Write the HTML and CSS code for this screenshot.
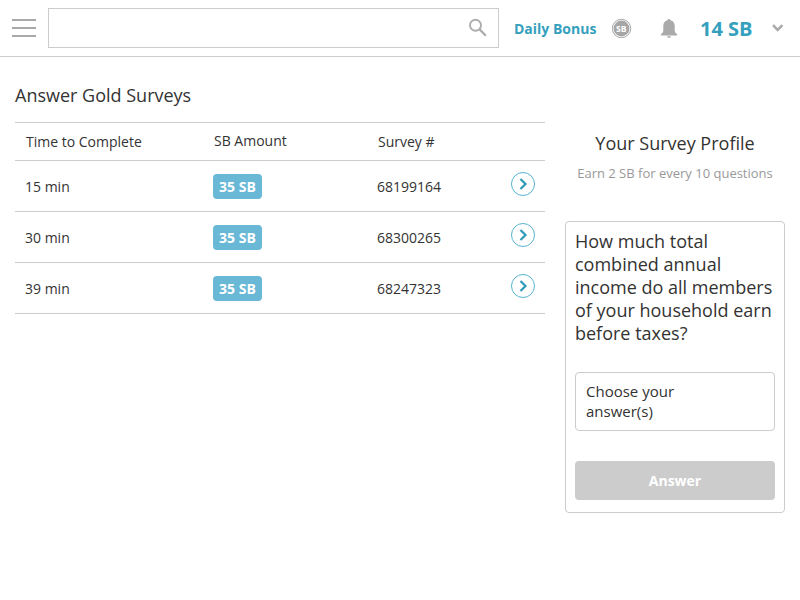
FILE: index.html
```
<!DOCTYPE html>
<html lang="en">
<head>
<meta charset="utf-8">
<title>Answer Gold Surveys</title>
<link rel="stylesheet" href="styles.css">
</head>
<body>
<header class="topbar">
  <div class="menu"><span></span><span></span><span></span></div>
  <div class="search">
    <svg width="20" height="20" viewBox="0 0 20 20" fill="none" stroke="#adadad"><circle cx="7.500" cy="7.300" r="5.500" stroke-width="1.900"/><path d="M11.600 11.400L17.900 17.700" stroke-width="2.300"/></svg>
  </div>
  <a class="bonus">Daily Bonus</a>
  <svg class="coin" width="20" height="20" viewBox="0 0 20 20"><circle cx="9.500" cy="10.500" r="9.200" fill="#fff" stroke="#a6a6a6"/><circle cx="9.500" cy="10.500" r="7.900" fill="#a6a6a6"/><text x="9.300" y="13.500" text-anchor="middle">SB</text></svg>
  <svg class="bell" width="18" height="20" viewBox="0 0 18 20" fill="#aaa"><path d="M9 1a1.500 1.500 0 0 1 1.500 1.300C13.300 3 14.700 5.200 14.700 8v4.500c0 1.600.7 2.600 2.300 3.600v1.400H1v-1.400c1.600-1 2.300-2 2.300-3.600V8c0-2.800 1.400-5 4.200-5.700A1.500 1.500 0 0 1 9 1zM7 18.200h4c-.1 1-.9 1.600-2 1.600s-1.900-.6-2-1.600z"/></svg>
  <b class="balance">14 SB</b>
  <svg class="chev" width="12" height="8" viewBox="0 0 12 8" fill="none" stroke="#a9a9a9" stroke-width="2.500"><path d="M1 1.200l4.700 4.700 4.700-4.700"/></svg>
</header>
<main class="page">
  <section class="surveys">
    <h1>Answer Gold Surveys</h1>
    <div class="row head"><span>Time to Complete</span><span class="amount">SB Amount</span><span>Survey #</span></div>
    <div class="row"><span>15 min</span><span><b class="badge">35 SB</b></span><span>68199164</span><svg class="go" width="24" height="24" viewBox="0 0 24 24"><circle cx="12" cy="12" r="11.500"/><path d="M9.500 7l5 5-5 5"/></svg></div>
    <div class="row"><span>30 min</span><span><b class="badge">35 SB</b></span><span>68300265</span><svg class="go" width="24" height="24" viewBox="0 0 24 24"><circle cx="12" cy="12" r="11.500"/><path d="M9.500 7l5 5-5 5"/></svg></div>
    <div class="row"><span>39 min</span><span><b class="badge">35 SB</b></span><span>68247323</span><svg class="go" width="24" height="24" viewBox="0 0 24 24"><circle cx="12" cy="12" r="11.500"/><path d="M9.500 7l5 5-5 5"/></svg></div>
  </section>
  <aside class="profile">
    <h2>Your Survey Profile</h2>
    <p class="earn">Earn 2 SB for every 10 questions</p>
    <div class="card">
      <p class="question">How much total combined annual income do all members of your household earn before taxes?</p>
      <div class="choose">Choose your<br>answer(s)</div>
      <button class="answer">Answer</button>
    </div>
  </aside>
</main>
</body>
</html>
```
FILE: styles.css
```
* { box-sizing: border-box; }
body { margin: 0; background: #fff; color: #333; font: 14px/20px "Open Sans", sans-serif; }
h1, h2, p { margin: 0; font-weight: 400; }
svg { display: block; flex: none; }
.topbar { height: 57px; border-bottom: 1px solid #ccc; display: flex; align-items: center; padding: 0 16px 0 12px; white-space: nowrap; }
.menu { width: 24px; height: 18px; display: flex; flex-direction: column; justify-content: space-between; }
.menu span { height: 2px; background: #a9a9a9; }
.search { width: 451px; height: 40px; margin-left: 12px; border: 1px solid #ccc; display: flex; align-items: center; justify-content: flex-end; padding-right: 10px; }
.bonus { width: 83px; margin-left: 15px; padding-top: 2px; font-weight: 700; color: #35a0bd; }
.coin { margin-left: 15px; }
.coin text { font-size: 8.5px; font-weight: 700; fill: #fff; }
.bell { margin-left: 28px; }
.balance { width: 52px; margin-left: 22px; padding-top: 2px; font-size: 20px; color: #35a0bd; }
.chev { margin-left: 20px; }
.page { display: flex; gap: 20px; padding: 0 15px; }
.surveys { width: 530px; }
h1 { font-size: 18px; line-height: 24px; padding: 26px 0 15px; }
.row { height: 51px; border-bottom: 1px solid #ccc; display: grid; grid-template-columns: 188px 164px 134px 24px; padding: 1px 10px 0; align-items: center; }
.head { height: 39px; border-top: 1px solid #ccc; padding: 0 11px; }
.amount { padding-bottom: 2px; }
.badge { display: block; width: 49px; height: 25px; line-height: 25px; border-radius: 4px; background: #69b8d6; color: #fff; text-align: center; }
.go { margin-top: -5px; fill: none; }
.go circle { stroke: #56b3d0; }
.go path { stroke: #2d9ab7; stroke-width: 2.2; }
.profile { width: 220px; padding-top: 73px; }
h2 { text-align: center; font-size: 18px; line-height: 26px; }
.earn { text-align: center; font-size: 13px; color: #999; margin-top: 7px; white-space: nowrap; }
.card { height: 292px; margin-top: 38px; border: 1px solid #ccc; border-radius: 4px; padding: 8px 9px 9px; }
.question { font-size: 18px; line-height: 23px; height: 115px; }
.choose { height: 59px; margin-top: 27px; border: 1px solid #ccc; border-radius: 4px; padding: 8px 10px; font-size: 15px; }
.answer { display: block; width: 200px; height: 39px; margin-top: 30px; border: 0; border-radius: 4px; background: #ccc; color: #fff; font: 700 14px "Open Sans", sans-serif; }
```
